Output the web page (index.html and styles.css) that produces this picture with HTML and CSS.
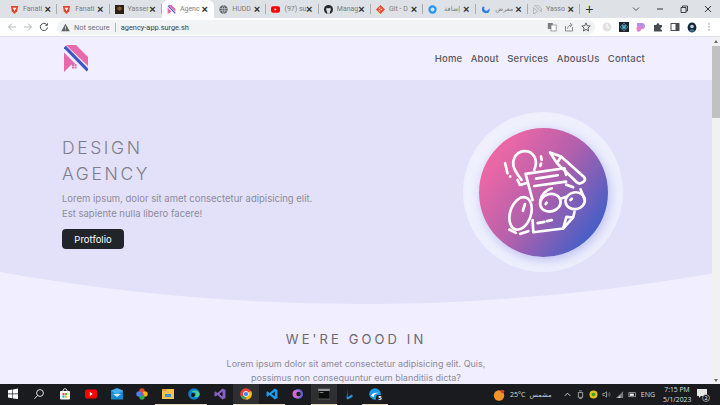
FILE: index.html
```html
<!DOCTYPE html>
<html lang="en">
<head>
<meta charset="utf-8">
<title>Agency</title>
<link rel="stylesheet" href="styles.css">
</head>
<body>
<div class="tabstrip">
  <div class="tab"><svg class="fav" viewBox="0 0 10 10"><path d="M1 1h8l-1 6-3 3-3-3z" fill="#e5432d"/><path d="M3 3h4L5 7z" fill="#fff"/></svg><span class="tab-title">Fanati</span><span class="x">×</span></div>
  <div class="tab"><svg class="fav" viewBox="0 0 10 10"><path d="M1 1h8l-1 6-3 3-3-3z" fill="#e5432d"/><path d="M3 3h4L5 7z" fill="#fff"/></svg><span class="tab-title">Fanati</span><span class="x">×</span></div>
  <div class="tab"><svg class="fav" viewBox="0 0 10 10"><rect width="10" height="10" fill="#2b2119"/><circle cx="5" cy="4" r="2.4" fill="#8a5a2a"/></svg><span class="tab-title">Yasser</span><span class="x">×</span></div>
  <div class="tab active"><svg class="fav" viewBox="0 0 24 28"><path d="M2 0h10l12 12v9z" fill="#e868ac"/><path d="M0 8l12 12-5 4-7 4z" fill="#e868ac"/><path d="M1 2l23 24" stroke="#3f55c4" stroke-width="3.5"/></svg><span class="tab-title">Agenc</span><span class="x">×</span></div>
  <div class="tab"><svg class="fav" viewBox="0 0 10 10"><circle cx="5" cy="5" r="4.6" fill="#5f6368"/><path d="M1 4h8M1 6.500h8M5 .5c-2 2.500-2 6.500 0 9M5 .5c2 2.500 2 6.500 0 9" stroke="#dee1e6" stroke-width=".6" fill="none"/></svg><span class="tab-title">HUDD</span><span class="x">×</span></div>
  <div class="tab"><svg class="fav" viewBox="0 0 10 10"><rect y="1.500" width="10" height="7" rx="2" fill="#f00"/><path d="M4 3.500l2.500 1.500L4 6.500z" fill="#fff"/></svg><span class="tab-title">(97) su</span><span class="x">×</span></div>
  <div class="tab"><svg class="fav" viewBox="0 0 10 10"><circle cx="5" cy="5" r="5" fill="#24292f"/><path d="M3.500 9.800V7.500C3 6.800 2.300 6 2.500 4.500L3 3l1.200.5h1.600L7 3l.5 1.500c.2 1.500-.5 2.300-1 3v2.300z" fill="#dee1e6"/></svg><span class="tab-title">Manag</span><span class="x">×</span></div>
  <div class="tab"><svg class="fav" viewBox="0 0 10 10"><path d="M5 0l5 5-5 5-5-5z" fill="#e84e31"/><circle cx="4" cy="3.500" r=".8" fill="#fff"/><circle cx="6" cy="5" r=".8" fill="#fff"/><circle cx="4" cy="6.500" r=".8" fill="#fff"/></svg><span class="tab-title">Git - D</span><span class="x">×</span></div>
  <div class="tab"><svg class="fav" viewBox="0 0 10 10"><circle cx="5" cy="5" r="3.400" fill="none" stroke="#2196f3" stroke-width="2.400"/></svg><span class="tab-title rtl">إضافة</span><span class="x">×</span></div>
  <div class="tab"><svg class="fav" viewBox="0 0 10 10"><path d="M2 1.500c-2.500 4 0 8 4 7.500 3 0 4-2.500 3.500-5L7 6C5 7 2.500 5 4 2.500z" fill="#2f7fe0"/></svg><span class="tab-title rtl">معرض</span><span class="x">×</span></div>
  <div class="tab"><svg class="fav" viewBox="0 0 24 28"><path d="M2 0h10l12 12v9zM0 8l12 12-5 4-7 4z" fill="none" stroke="#9b9ba0" stroke-width="2"/></svg><span class="tab-title">Yasso</span><span class="x">×</span></div>
  <span class="newtab">+</span>
  <div class="winctl">
    <svg class="ctl" viewBox="0 0 10 10"><path d="M2 3.500l3 3 3-3" fill="none" stroke="#555" stroke-width="1"/></svg>
    <svg class="ctl" viewBox="0 0 10 10"><path d="M2 5h6" stroke="#333" stroke-width="1"/></svg>
    <svg class="ctl" viewBox="0 0 10 10"><path d="M2 3.500h5v5H2zM3.500 3.500V2h5v5H7" fill="none" stroke="#333" stroke-width=".9"/></svg>
    <svg class="ctl" viewBox="0 0 10 10"><path d="M2 2l6 6M8 2l-6 6" stroke="#333" stroke-width="1"/></svg>
  </div>
</div>

<div class="toolbar">
  <svg class="tool" viewBox="0 0 10 10"><path d="M9 5H1.500M5 1.500L1.500 5 5 8.500" fill="none" stroke="#b4b7bb" stroke-width="1"/></svg>
  <svg class="tool" viewBox="0 0 10 10"><path d="M1 5h7.500M5 1.500L8.500 5 5 8.500" fill="none" stroke="#b4b7bb" stroke-width="1"/></svg>
  <svg class="tool" viewBox="0 0 10 10"><path d="M8.500 5.500A3.600 3.600 0 1 1 7.500 2.400" fill="none" stroke="#4a4d50" stroke-width="1"/><path d="M8.800 .8v3h-3z" fill="#4a4d50"/></svg>
  <div class="omnibox">
    <svg class="warn" viewBox="0 0 10 10"><path d="M5 .8L9.800 9.200H.2z" fill="#5f6368"/><path d="M5 3.800v2.600M5 7.200v.8" stroke="#f1f3f4" stroke-width=".9"/></svg>
    <span class="insecure">Not secure</span>
    <span class="url">agency-app.surge.sh</span>
    <span class="omni-actions">
      <svg class="omni-i" viewBox="0 0 10 10"><rect x=".8" y="1" width="5" height="6" fill="#7b7e82"/><rect x="4" y="3" width="5.200" height="6" fill="#fff" stroke="#7b7e82" stroke-width=".7"/></svg>
      <svg class="omni-i" viewBox="0 0 10 10"><path d="M1.500 4v5h7V5M3.500 6.500C4 4 5.500 3 7.500 3M6 1l2.200 2L6 5" fill="none" stroke="#6e7175" stroke-width=".8"/></svg>
      <svg class="omni-i" viewBox="0 0 10 10"><path d="M5 .9l1.200 2.800 3 .3-2.300 2 .7 3L5 7.400 2.400 9l.7-3-2.300-2 3-.3z" fill="none" stroke="#4a4d50" stroke-width=".9"/></svg>
    </span>
  </div>
  <div class="extensions">
    <svg class="ext" viewBox="0 0 10 10"><circle cx="5" cy="5" r="4.500" fill="#e3e3e3"/><path d="M5 2v3l2 1" stroke="#fff" fill="none"/></svg>
    <svg class="ext" viewBox="0 0 10 10"><rect width="10" height="10" fill="#20232a"/><circle cx="5" cy="5" r="1" fill="#61dafb"/><ellipse cx="5" cy="5" rx="4" ry="1.600" fill="none" stroke="#61dafb" stroke-width=".5"/><ellipse cx="5" cy="5" rx="1.600" ry="4" fill="none" stroke="#61dafb" stroke-width=".5"/></svg>
    <svg class="ext" viewBox="0 0 10 10"><path d="M1 1h5c4 0 4 6 0 6H4v2.500H1z" fill="#b78ee8"/><circle cx="3" cy="6.500" r="2.500" fill="#ea7fc4"/></svg>
    <svg class="ext" viewBox="0 0 10 10"><path d="M1 3h2.500c0-2.500 3-2.500 3 0H9v2.200c-2-.5-2 3 0 2.500V9.500H1z" fill="#4a4d50"/></svg>
    <svg class="ext" viewBox="0 0 10 10"><rect x="1" y="1.500" width="8" height="7" fill="none" stroke="#4a4d50" stroke-width="1"/><rect x="5.500" y="1.500" width="3.500" height="7" fill="#4a4d50"/></svg>
    <svg class="ext avatar" viewBox="0 0 10 10"><ellipse cx="5" cy="5" rx="4.400" ry="5" fill="#12283c"/><circle cx="5" cy="4" r="1.800" fill="#c9ced3"/><path d="M2.500 9c0-3 5-3 5 0" fill="#4a7a9a"/></svg>
    <svg class="ext" viewBox="0 0 10 10"><path d="M5 1.500v1M5 4.500v1M5 7.500v1" stroke="#4a4d50" stroke-width="1.100"/></svg>
  </div>
</div>

<div class="viewport">
  <main class="page">
    <header class="site-nav">
      <svg class="logo" viewBox="0 0 24 28">
        <path d="M2 0h10l12 12v9z" fill="#e868ac"/>
        <path d="M0 7.500l11.500 11.500L7 20l-7 7z" fill="#e868ac"/>
        <rect x="8" y="19" width="2" height="2" fill="#e868ac"/><rect x="10.500" y="19" width="2" height="2" fill="#e868ac"/><rect x="8" y="21.500" width="2" height="2" fill="#e868ac"/><rect x="10.500" y="21.500" width="2" height="2" fill="#e868ac"/>
        <path d="M.8 1.800l23 23.500" stroke="#3f55c4" stroke-width="3.200"/>
      </svg>
      <nav class="links">
        <a>Home</a><a>About</a><a>Services</a><a>AbousUs</a><a>Contact</a>
      </nav>
    </header>
    <section class="hero">
      <div class="hero-text">
        <h1>DESIGN<br>AGENCY</h1>
        <p>Lorem ipsum, dolor sit amet consectetur adipisicing elit.<br>Est sapiente nulla libero facere!</p>
        <button class="cta">Protfolio</button>
      </div>
      <div class="halo">
        <div class="disc">
          <svg class="art" viewBox="85 85 385 385" fill="none" stroke="#fff" stroke-width="8" stroke-linecap="round" stroke-linejoin="round">
            <path d="M212 240C196 218 180 198 190 176C200 150 236 146 250 170C256 181 256 196 250 210"/>
            <path d="M200 240L207 255L226 250"/>
            <path d="M270 170L272 180M270 191L268 198M163 190L170 220M178 229V230"/>
            <path d="M297 158L330 170L400 233Q404 240 396 246L386 251Q380 250 376 246L318 190Z M330 170L318 190"/>
            <path d="M224 222L340 205L345 225M224 222L245 300M245 360L247 396L336 385L346 350L366 352L336 385M366 352L370 335"/>
            <path d="M255 236L320 226M250 258L345 245M345 254L366 262"/>
            <ellipse cx="298" cy="308" rx="31" ry="26" transform="rotate(-15 298 308)"/>
            <ellipse cx="372" cy="302" rx="29" ry="25" transform="rotate(-10 372 302)"/>
            <path d="M268 302C270 285 285 270 302 265M327 296L344 291M400 298L388 268"/>
            <path d="M284 312L287 308M358 300L362 296"/>
            <ellipse cx="209" cy="340" rx="31" ry="50" transform="rotate(18 209 340)"/>
            <path d="M222 312L216 332"/>
            <path d="M175 388L195 398M208 401L232 393M260 369L280 365M288 363L302 360"/>
          </svg>
        </div>
      </div>
    </section>
    <section class="good">
      <h2>WE'RE GOOD IN</h2>
      <p>Lorem ipsum dolor sit amet consectetur adipisicing elit. Quis,<br>possimus non consequuntur eum blanditiis dicta?</p>
    </section>
  </main>
  <div class="scrollbar">
    <span class="arrow up"></span>
    <span class="thumb"></span>
    <span class="arrow down"></span>
  </div>
</div>

<footer class="taskbar">
  <div class="apps">
    <span class="app"><svg viewBox="0 0 12 12"><path d="M1 2.200l4.400-.7v4H1zM6 1.400L11 .6v4.900H6zM1 6.200h4.400v4L1 9.500zM6 6.200h5v4.900l-5-.7z" fill="#fff"/></svg></span>
    <span class="app"><svg viewBox="0 0 12 12"><circle cx="7" cy="5" r="3.400" fill="none" stroke="#ddd" stroke-width="1"/><path d="M4.500 7.500L1.500 10.800" stroke="#ddd" stroke-width="1"/></svg></span>
    <span class="app"><svg viewBox="0 0 12 12"><rect x="1" y="3" width="10" height="8.500" rx="1" fill="#f4f4f4"/><path d="M4 3c0-3 4-3 4 0" fill="none" stroke="#eee"/><rect x="3.500" y="5" width="2" height="2" fill="#f25022"/><rect x="6" y="5" width="2" height="2" fill="#7fba00"/><rect x="3.500" y="7.500" width="2" height="2" fill="#00a4ef"/><rect x="6" y="7.500" width="2" height="2" fill="#ffb900"/></svg></span>
    <span class="app"><svg viewBox="0 0 12 12"><rect y="1.500" width="12" height="9" rx="2" fill="#f00"/><path d="M4.800 4l3 2-3 2z" fill="#fff"/></svg></span>
    <span class="app"><svg viewBox="0 0 12 12"><rect y="2.500" width="12" height="9" fill="#1a8ad0"/><path d="M0 2.500L6 0l6 2.500L6 7z" fill="#41b0ea"/><path d="M2 6h8L6 9z" fill="#d6eefb"/></svg></span>
    <span class="app"><svg viewBox="0 0 12 12"><circle cx="6" cy="3" r="2.700" fill="#e8452c"/><circle cx="9" cy="6" r="2.700" fill="#f5b400"/><circle cx="6" cy="9" r="2.700" fill="#34a853"/><circle cx="3" cy="6" r="2.700" fill="#4285f4"/><circle cx="6" cy="6" r="1.500" fill="#a04ac0"/></svg></span>
    <span class="app running"><svg viewBox="0 0 12 12"><rect y="1" width="12" height="10" fill="#f2c14e"/><rect y="1" width="5" height="2" fill="#e0a52c"/><rect x="3" y="6" width="6" height="3" fill="#3a96d4"/></svg></span>
    <span class="app running"><svg viewBox="0 0 12 12"><circle cx="6" cy="6" r="5.800" fill="#0c7fd0"/><path d="M11.800 6.500C11 2 5 1 3 4.500c2-1 5-.5 5 2 0 1.500-2 1.500-3 1 1 2 5 3 6.800-1z" fill="#51d28c"/><circle cx="5" cy="7" r="2" fill="#111"/></svg></span>
    <span class="app"><svg viewBox="0 0 12 12"><path d="M8.500.5L11.500 2v8l-3 1.500L3.500 7 1.500 8.500.5 8V4l1-.5 2 1.500z" fill="#8661c5"/><path d="M8.500 3.500L5.500 6l3 2.500z" fill="#111"/></svg></span>
    <span class="app current running"><svg viewBox="0 0 12 12"><circle cx="6" cy="6" r="5.800" fill="#ea4335"/><path d="M6 6L1 9a5.800 5.800 0 0 0 5.500 2.800z" fill="#34a853"/><path d="M6 6l5 -3a5.800 5.800 0 0 1-4.500 8.800z" fill="#fbbc05"/><circle cx="6" cy="6" r="2.600" fill="#4285f4" stroke="#fff" stroke-width=".8"/></svg></span>
    <span class="app running"><svg viewBox="0 0 12 12"><path d="M8.800.5L11.500 2v8l-2.700 1.500L3.500 7 1.400 8.700.5 8V4l.9-.7L3.500 5zM8.800 3.500L5.700 6l3.100 2.500z" fill="#1e9be8"/></svg></span>
    <span class="app"><svg viewBox="0 0 12 12"><circle cx="6" cy="6" r="5" fill="#5e62d6"/><circle cx="4.500" cy="6" r="4" fill="#d16ad0"/><circle cx="6.500" cy="6" r="2.200" fill="#1c1c20"/></svg></span>
    <span class="app current running"><svg viewBox="0 0 12 12"><rect y="1" width="12" height="10" fill="#0c0c0c" stroke="#777" stroke-width=".6"/><rect x=".3" y="1.300" width="11.400" height="1.500" fill="#bbb"/><path d="M1.500 4.500h4" stroke="#ccc" stroke-width=".6"/></svg></span>
    <span class="app"><svg viewBox="0 0 12 12"><path d="M3.500 1v8l4-2-2-1 3 1v2l-5 2.500-1-1z" fill="#1e9be8"/></svg></span>
    <span class="app running"><svg viewBox="0 0 12 12"><circle cx="6" cy="6" r="5.800" fill="#1e9be8"/><path d="M2 8c1-3 4-4 8-3-3 0-5 1-5 4z" fill="#fff"/></svg><b class="badge">5</b></span>
  </div>
  <div class="tray">
    <svg class="sun" viewBox="0 0 12 12"><circle cx="6" cy="6.500" r="5.200" fill="#f0932b"/><circle cx="9.500" cy="2.500" r="1.800" fill="#d8402c"/></svg>
    <span class="temp">25°C</span>
    <span class="weather">مشمس</span>
    <svg class="tray-i" viewBox="0 0 10 10"><path d="M2 6.500l3-3 3 3" fill="none" stroke="#ddd"/></svg>
    <svg class="tray-i" viewBox="0 0 10 10"><rect x="2.500" y="3" width="5" height="5" fill="none" stroke="#ccc" stroke-width=".8"/><path d="M3.500 1h3M3.500 9.500h3" stroke="#ccc" stroke-width=".8"/></svg>
    <svg class="tray-i" viewBox="0 0 10 10"><circle cx="5" cy="5" r="4.500" fill="#e3c21a"/><circle cx="5" cy="5" r="2" fill="#3e9b3a"/></svg>
    <svg class="tray-i" viewBox="0 0 10 10"><path d="M1 3.800h1.800L5 2v6L2.800 6.200H1z" fill="none" stroke="#ccc" stroke-width=".7"/><path d="M6.500 3.500c.7 1 .7 2 0 3M8 2.500c1.200 1.500 1.200 3.500 0 5" fill="none" stroke="#aaa" stroke-width=".6"/></svg>
    <svg class="tray-i" viewBox="0 0 10 10"><path d="M1 9L9 1.500V9z" fill="#777"/><path d="M3 9l3-3v3z" fill="#ddd"/></svg>
    <svg class="tray-i" viewBox="0 0 10 10"><rect x="1" y="3" width="7.500" height="4.500" fill="none" stroke="#ccc" stroke-width=".7"/><rect x="2" y="4" width="4.500" height="2.500" fill="#eee"/></svg>
    <span class="lang">ENG</span>
    <span class="clock">7:15 PM<br>5/1/2023</span>
    <svg class="notify" viewBox="0 0 14 14"><path d="M1 1h10v7H5l-2 2V8H1z" fill="#e6e6e6"/><circle cx="10" cy="10" r="3.500" fill="#1a1a1c" stroke="#ddd" stroke-width=".6"/><text x="10" y="12" font-size="5.500" text-anchor="middle" fill="#fff" class="notify-n">2</text></svg>
  </div>
</footer>
</body>
</html>
```

FILE: styles.css
```css
* { box-sizing: border-box; margin: 0; padding: 0; }
html, body { width: 720px; height: 405px; overflow: hidden; }
body { display: flex; flex-direction: column; font-family: "Roboto", "Noto Sans", "DejaVu Sans", sans-serif; background: #f0eeff; }

.tabstrip { height: 18px; flex: none; display: flex; align-items: center; background: #dee1e6; padding-left: 5px; }
.tab { width: 52.3px; height: 18px; flex: none; display: flex; align-items: center; padding: 0 3px 0 5px; position: relative; }
.tab::after { content: ""; position: absolute; right: 0; top: 4px; bottom: 4px; width: 1px; background: #a9acb0; }
.tab .fav { width: 9px; height: 9px; flex: none; margin-right: 4px; }
.tab-title { flex: 1; min-width: 0; white-space: nowrap; font-size: 7px; color: #7c7e82; }
.tab-title.rtl { text-align: center; font-family: "DejaVu Sans", sans-serif; font-size: 6.5px; }
.x { width: 7px; flex: none; margin-right: 3px; font-size: 11px; line-height: 10px; font-weight: 600; color: #333; font-family: "Liberation Sans", sans-serif; text-align: center; }
.tab.active { background: #fff; border-radius: 6px 6px 0 0; }
.tab.active::after { display: none; }
.newtab { margin-left: 2px; width: 14px; font: 400 14px/14px "Liberation Sans", sans-serif; color: #333; text-align: center; }
.winctl { margin-left: auto; display: flex; gap: 14px; padding-right: 7px; }
.ctl { width: 10px; height: 10px; }

.toolbar { height: 19px; flex: none; display: flex; align-items: center; background: #fff; border-bottom: 1px solid #dfdff0; padding-left: 7px; }
.tool { width: 10px; height: 10px; flex: none; margin-right: 6px; }
.omnibox { margin-left: 2px; width: 538px; height: 15px; display: flex; align-items: center; border-radius: 8px; background: #f1f3f4; padding-left: 4px; font-size: 7.400px; }
.warn { width: 9px; height: 9px; flex: none; }
.insecure { margin-left: 4px; padding-right: 5px; border-right: 1px solid #b0b2b5; line-height: 9px; color: #6f7276; white-space: nowrap; }
.url { margin-left: 5px; color: #3c4043; white-space: nowrap; }
.omni-actions { margin-left: auto; display: flex; gap: 7px; padding-right: 4px; }
.omni-i { width: 10px; height: 10px; flex: none; }
.extensions { display: flex; align-items: center; gap: 7px; padding-left: 7px; }
.ext { width: 10px; height: 10px; flex: none; }
.avatar { height: 11px; }

.viewport { flex: 1; min-height: 0; display: flex; }
.page { flex: 1; min-width: 0; overflow: hidden; background: #f0eeff; font-family: "Inter", "Open Sans", sans-serif; }
.scrollbar { width: 8px; flex: none; display: flex; flex-direction: column; align-items: center; background: #f1f1f1; padding-top: 3px; padding-bottom: 2px; }
.thumb { width: 8px; height: 72px; margin-top: 3px; background: #c1c1c1; }
.arrow { width: 0; height: 0; border-left: 2.500px solid transparent; border-right: 2.500px solid transparent; }
.arrow.up { border-bottom: 3px solid #6a6a6a; }
.arrow.down { margin-top: auto; border-top: 3px solid #6a6a6a; }

.site-nav { height: 43px; display: flex; align-items: center; justify-content: space-between; padding: 0 67px 0 64px; }
.logo { width: 24px; height: 28px; margin-top: 1px; }
.links { display: flex; gap: 8.300px; }
.links a { font-size: 9.500px; font-weight: 500; letter-spacing: .2px; color: #5a5960; }

.hero { height: 224px; display: flex; justify-content: space-between; background: #e3e0fa; clip-path: path("M0 0H720V192Q360 256 0 192Z"); padding: 32px 89px 0 62px; }
.hero-text { padding-top: 23px; }
.hero h1 { font-size: 17.500px; line-height: 26px; font-weight: 300; letter-spacing: 2.600px; color: #7f7e88; }
.hero p { margin-top: 4px; font-size: 9.500px; line-height: 15px; color: #8d8c99; }
.cta { display: block; margin-top: 8px; width: 62px; height: 20px; border: none; border-radius: 4px; background: #212529; color: #fff; font: 400 9.500px "Inter", sans-serif; }

.halo { width: 160px; height: 160px; display: flex; align-items: center; justify-content: center; border-radius: 50%; background: radial-gradient(circle closest-side, #f1f2fd 85%, #eeeffc 100%); }
.disc { width: 129px; height: 129px; border-radius: 50%; background: linear-gradient(125deg, #ea67a6 18%, #b260ac 50%, #3f5fc8 88%); box-shadow: 2px 3px 12px rgba(80, 90, 220, .35); }
.art { display: block; width: 129px; height: 129px; }

.good { text-align: center; padding-top: 27px; }
.good h2 { font-size: 13px; line-height: 17px; font-weight: 400; letter-spacing: 3.100px; color: #6c696f; }
.good p { margin-top: 9px; font-size: 9px; line-height: 14px; color: #8d8c99; }

.taskbar { height: 21px; flex: none; display: flex; align-items: center; justify-content: space-between; background: #1a1b1e; font-family: "Open Sans", sans-serif; color: #e8e8e8; }
.apps { display: flex; align-items: stretch; height: 21px; }
.app { width: 25.900px; height: 21px; display: flex; align-items: center; justify-content: center; position: relative; border-bottom: 1px solid transparent; }
.app svg { width: 12px; height: 12px; }
.app.current { background: #2e2f32; }
.app.running { border-bottom-color: #e6d3b8; }
.badge { position: absolute; right: 5px; bottom: 2px; width: 7px; height: 7px; border-radius: 2px; background: #222; font: 700 6px/7px "Open Sans", sans-serif; color: #fff; text-align: center; }
.tray { display: flex; align-items: center; font-size: 7px; }
.sun { width: 12px; height: 12px; margin-right: 5px; }
.temp { color: #ddd; }
.weather { margin-left: 4px; margin-right: 11px; font-family: "DejaVu Sans", sans-serif; font-size: 6.800px; color: #ccc; }
.tray-i { width: 9px; height: 9px; margin-right: 4px; }
.lang { font-size: 7px; color: #ddd; }
.clock { margin-left: 8px; width: 28px; text-align: center; font-size: 6.800px; line-height: 10px; color: #ddd; white-space: nowrap; }
.notify { width: 14px; height: 14px; margin: 0 10px 0 5px; }
.notify-n { font-family: "Open Sans", sans-serif; }
```
